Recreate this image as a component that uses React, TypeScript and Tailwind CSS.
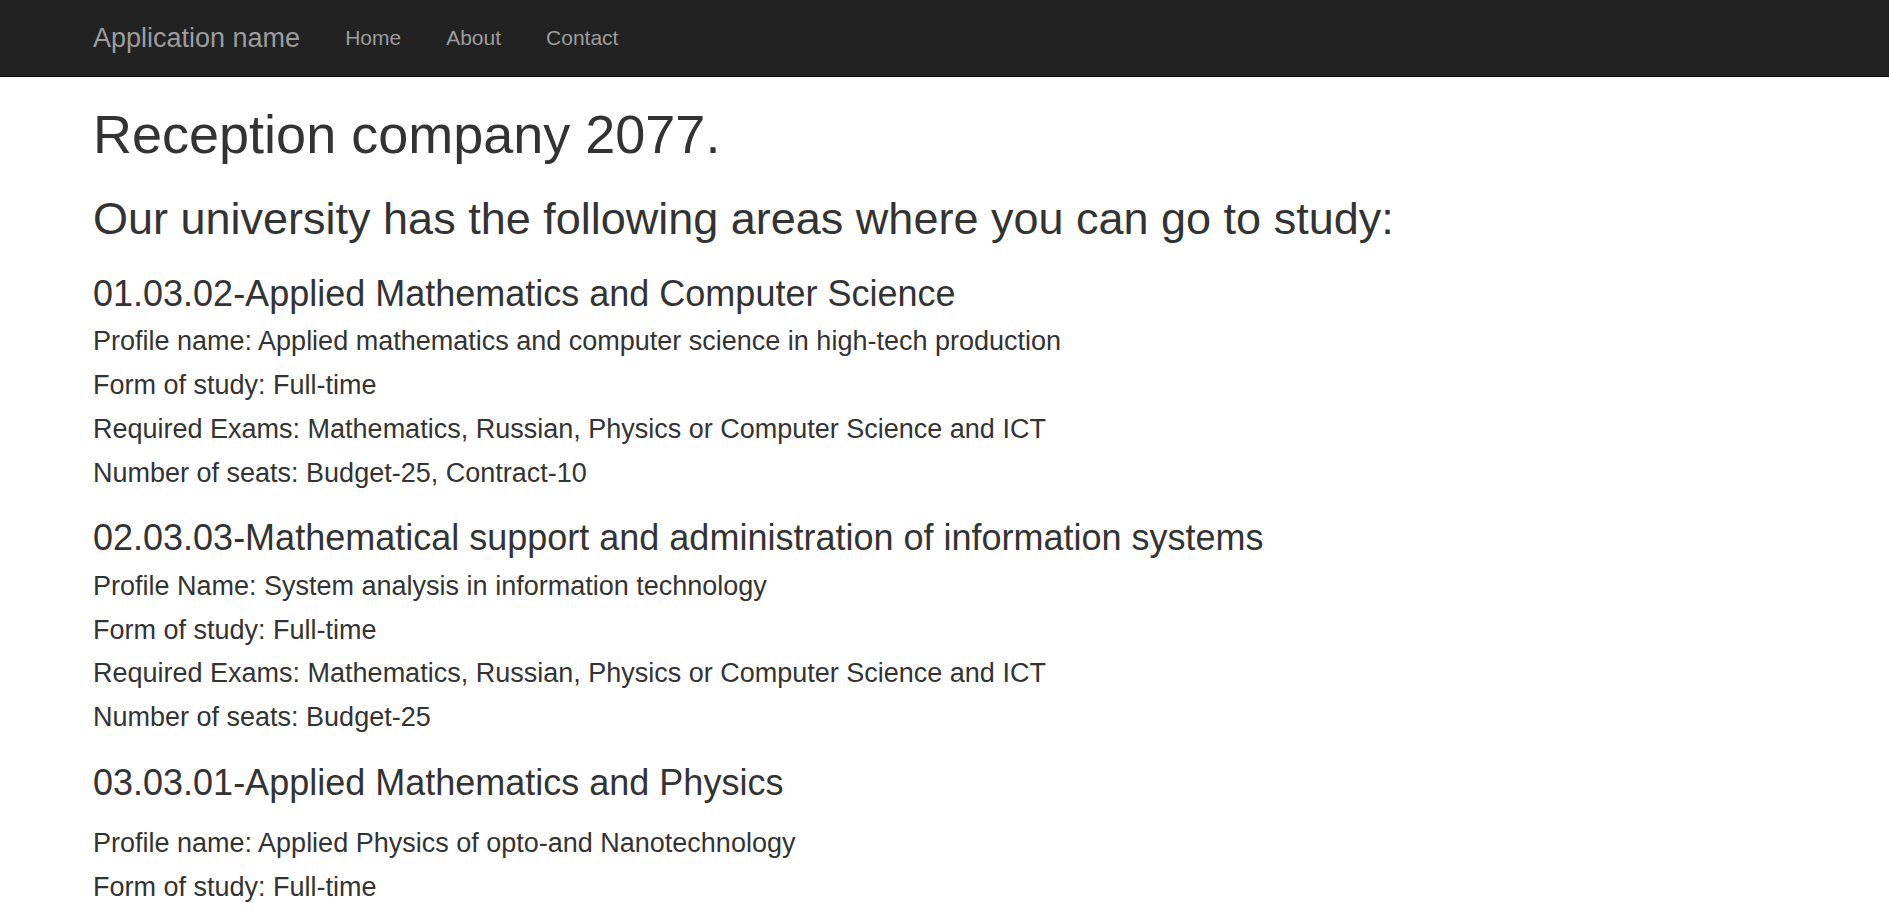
import React from "react";

const programs = [
  {
    title: "01.03.02-Applied Mathematics and Computer Science",
    lines: [
      "Profile name: Applied mathematics and computer science in high-tech production",
      "Form of study: Full-time",
      "Required Exams: Mathematics, Russian, Physics or Computer Science and ICT",
      "Number of seats: Budget-25, Contract-10",
    ],
  },
  {
    title: "02.03.03-Mathematical support and administration of information systems",
    lines: [
      "Profile Name: System analysis in information technology",
      "Form of study: Full-time",
      "Required Exams: Mathematics, Russian, Physics or Computer Science and ICT",
      "Number of seats: Budget-25",
    ],
  },
  {
    title: "03.03.01-Applied Mathematics and Physics",
    spaced: true,
    lines: [
      "Profile name: Applied Physics of opto-and Nanotechnology",
      "Form of study: Full-time",
    ],
  },
];

export default function App() {
  return (
    <div className="min-h-screen bg-white text-[#333] font-['Liberation_Sans',Arial,sans-serif]">
      {/* Navbar */}
      <div className="h-[77px] bg-[#222] border-b border-[#080808]">
        <div className="mx-auto w-[1703px] flex items-center h-full">
          <a className="text-[27px] leading-[30px] text-[#9d9d9d] pr-[22.5px]">
            Application name
          </a>
          <nav className="flex">
            {["Home", "About", "Contact"].map((item) => (
              <a
                key={item}
                className="px-[22.5px] text-[21px] leading-[30px] text-[#9d9d9d]"
              >
                {item}
              </a>
            ))}
          </nav>
        </div>
      </div>

      {/* Content */}
      <div className="mx-auto w-[1703px] pb-[40px]">
        <h1 className="text-[54px] leading-[1.1] mt-[28px] mb-[15px]">
          Reception company 2077.
        </h1>
        <h2 className="text-[45px] leading-[1.1] mt-[30px] mb-[15px]">
          Our university has the following areas where you can go to study:
        </h2>
        {programs.map((p) => (
          <div key={p.title}>
            <h3
              className={`text-[36px] leading-[1.1] mt-[30px] ${
                p.spaced ? "mb-[27px]" : "mb-[14px]"
              }`}
            >
              {p.title}
            </h3>
            {p.lines.map((line) => (
              <div key={line} className="text-[27px] leading-[29.7px] my-[14px]">
                {line}
              </div>
            ))}
          </div>
        ))}
      </div>
    </div>
  );
}
